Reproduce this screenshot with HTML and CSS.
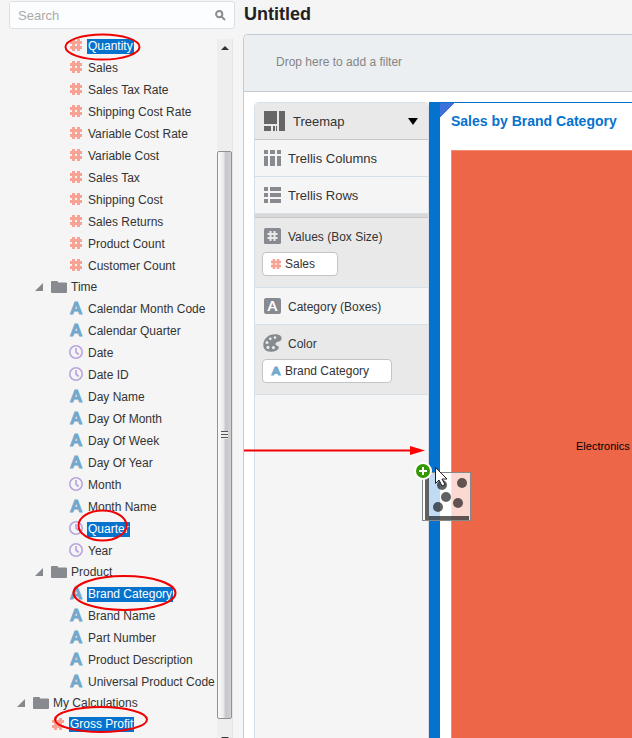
FILE: index.html
```html
<!DOCTYPE html>
<html lang="en">
<head>
<meta charset="utf-8">
<meta name="viewport" content="width=device-width, initial-scale=1">
<title>Untitled</title>
<link rel="stylesheet" href="styles.css">
</head>
<body>
<svg class="defs" aria-hidden="true">
  <symbol id="hash" viewBox="0 0 12 12"><path d="M2 0h3v2h2V0h3v2h2v3h-2v2h2v3h-2v2H7v-2H5v2H2v-2H0V7h2V5H0V2h2zM5 5v2h2V5z" fill-rule="evenodd"/></symbol>
  <symbol id="clock" viewBox="0 0 14 14"><circle cx="7" cy="7" r="6.2" fill="none" stroke="currentColor" stroke-width="1.6"/><path d="M7 3v4.2l2.6 2.3" fill="none" stroke="currentColor" stroke-width="1.7"/></symbol>
  <symbol id="folder" viewBox="0 0 16 12"><path d="M0 1q0-1 1-1h5q1 0 1 1v.5h8q1 0 1 1V11q0 1-1 1H1q-1 0-1-1z"/></symbol>
  <symbol id="twist" viewBox="0 0 8 8"><path d="M8 0v8H0z"/></symbol>
</svg>
<div class="app">
  <aside class="sidebar">
    <label class="search">
      <input type="search" placeholder="Search" aria-label="Search">
      <svg class="lens" viewBox="0 0 11 11" aria-hidden="true"><circle cx="4.2" cy="4.2" r="3.1"/><path d="M6.6 6.6l3.4 3.4"/></svg>
    </label>
    <div class="browser">
      <ul class="tree">
        <li class="item"><svg class="ico hash"><use href="#hash"/></svg><span class="name picked">Quantity</span></li>
        <li class="item"><svg class="ico hash"><use href="#hash"/></svg><span class="name">Sales</span></li>
        <li class="item"><svg class="ico hash"><use href="#hash"/></svg><span class="name">Sales Tax Rate</span></li>
        <li class="item"><svg class="ico hash"><use href="#hash"/></svg><span class="name">Shipping Cost Rate</span></li>
        <li class="item"><svg class="ico hash"><use href="#hash"/></svg><span class="name">Variable Cost Rate</span></li>
        <li class="item"><svg class="ico hash"><use href="#hash"/></svg><span class="name">Variable Cost</span></li>
        <li class="item"><svg class="ico hash"><use href="#hash"/></svg><span class="name">Sales Tax</span></li>
        <li class="item"><svg class="ico hash"><use href="#hash"/></svg><span class="name">Shipping Cost</span></li>
        <li class="item"><svg class="ico hash"><use href="#hash"/></svg><span class="name">Sales Returns</span></li>
        <li class="item"><svg class="ico hash"><use href="#hash"/></svg><span class="name">Product Count</span></li>
        <li class="item"><svg class="ico hash"><use href="#hash"/></svg><span class="name">Customer Count</span></li>
        <li class="item group"><svg class="twist"><use href="#twist"/></svg><svg class="folder"><use href="#folder"/></svg><span class="name">Time</span></li>
        <li class="item"><span class="ico attr" aria-hidden="true">A</span><span class="name">Calendar Month Code</span></li>
        <li class="item"><span class="ico attr" aria-hidden="true">A</span><span class="name">Calendar Quarter</span></li>
        <li class="item"><svg class="ico clock"><use href="#clock"/></svg><span class="name">Date</span></li>
        <li class="item"><svg class="ico clock"><use href="#clock"/></svg><span class="name">Date ID</span></li>
        <li class="item"><span class="ico attr" aria-hidden="true">A</span><span class="name">Day Name</span></li>
        <li class="item"><span class="ico attr" aria-hidden="true">A</span><span class="name">Day Of Month</span></li>
        <li class="item"><span class="ico attr" aria-hidden="true">A</span><span class="name">Day Of Week</span></li>
        <li class="item"><span class="ico attr" aria-hidden="true">A</span><span class="name">Day Of Year</span></li>
        <li class="item"><svg class="ico clock"><use href="#clock"/></svg><span class="name">Month</span></li>
        <li class="item"><span class="ico attr" aria-hidden="true">A</span><span class="name">Month Name</span></li>
        <li class="item"><svg class="ico clock"><use href="#clock"/></svg><span class="name picked">Quarter</span></li>
        <li class="item"><svg class="ico clock"><use href="#clock"/></svg><span class="name">Year</span></li>
        <li class="item group"><svg class="twist"><use href="#twist"/></svg><svg class="folder"><use href="#folder"/></svg><span class="name">Product</span></li>
        <li class="item"><span class="ico attr" aria-hidden="true">A</span><span class="name picked">Brand Category</span></li>
        <li class="item"><span class="ico attr" aria-hidden="true">A</span><span class="name">Brand Name</span></li>
        <li class="item"><span class="ico attr" aria-hidden="true">A</span><span class="name">Part Number</span></li>
        <li class="item"><span class="ico attr" aria-hidden="true">A</span><span class="name">Product Description</span></li>
        <li class="item"><span class="ico attr" aria-hidden="true">A</span><span class="name">Universal Product Code</span></li>
        <li class="item group top"><svg class="twist"><use href="#twist"/></svg><svg class="folder"><use href="#folder"/></svg><span class="name">My Calculations</span></li>
        <li class="item shallow"><svg class="ico hash"><use href="#hash"/></svg><span class="name picked">Gross Profit</span></li>
      </ul>
      <div class="scrollbar" aria-hidden="true">
        <svg class="arrow" viewBox="0 0 8 4"><path d="M4 0l4 4H0z"/></svg>
        <div class="thumb"><span class="grip"></span></div>
        <svg class="arrow down" viewBox="0 0 8 4"><path d="M0 0h8L4 4z"/></svg>
      </div>
    </div>
  </aside>
  <main class="main">
    <h1 class="title">Untitled</h1>
    <section class="project">
      <div class="filters">Drop here to add a filter</div>
      <div class="workspace">
        <div class="grammar">
          <div class="row chooser">
            <svg class="treemap" viewBox="0 0 21 20" aria-hidden="true"><path d="M0 0h13v13H0zM15 0h6v20h-6zM0 15h7v5H0zM9 15h2v5H9zM12 15h1v5h-1z"/></svg>
            <select class="type" aria-label="Visualization type"><option>Treemap</option></select>
            <svg class="caret" viewBox="0 0 10 7" aria-hidden="true"><path d="M0 0h10L5 7z"/></svg>
          </div>
          <div class="row"><svg class="mark" viewBox="0 0 17 16" aria-hidden="true"><path d="M0 0h4v4H0zM6 0h5v4H6zM13 0h4v4h-4zM0 6h4v10H0zM6 6h5v10H6zM13 6h4v10h-4z"/></svg><span class="label">Trellis Columns</span></div>
          <div class="row"><svg class="mark" viewBox="0 0 17 16" aria-hidden="true"><path d="M0 0h4v4H0zM6 0h11v4H6zM0 6h4v4H0zM6 6h11v4H6zM0 12h4v4H0zM6 12h11v4H6z"/></svg><span class="label">Trellis Rows</span></div>
          <div class="divider"></div>
          <div class="slot">
            <div class="head"><svg class="mark" viewBox="0 0 17 16" aria-hidden="true"><rect width="17" height="16" rx="1.5"/><path class="cut" d="M6.5 3v10M10.5 3v10M3.5 6h10M3.5 10h10"/></svg><span class="label drop">Values (Box Size)</span></div>
            <button class="chip" type="button"><svg class="small hash"><use href="#hash"/></svg>Sales</button>
          </div>
          <div class="row"><span class="mark tile" aria-hidden="true">A</span><span class="label drop">Category (Boxes)</span></div>
          <div class="slot">
            <div class="head"><svg class="palette" viewBox="0 0 19 18" aria-hidden="true"><path d="M12 .3C5 .3.3 5.2.3 11 .3 15 3 17.7 7.5 17.7c4.8 0 8.500-2 8.300-4.500-.1-1.300-1.600-1.400-2.600-2-1.200-.8-.8-2.200.4-3 1.500-1 5-.4 5-4C18.600 1.500 15.500.3 12 .3z"/><g class="holes"><circle cx="12" cy="3.6" r="1.3"/><circle cx="7.3" cy="4.8" r="1.4"/><circle cx="4" cy="8.6" r="1.5"/><circle cx="5" cy="13.4" r="1.6"/><circle cx="10.4" cy="13.6" r="1.6"/></g></svg><span class="label drop">Color</span></div>
            <button class="chip" type="button"><span class="small attr" aria-hidden="true">A</span>Brand Category</button>
          </div>
        </div>
        <section class="viz">
          <h2 class="caption">Sales by Brand Category</h2>
          <div class="box">Electronics</div>
        </section>
      </div>
    </section>
  </main>
</div>
<svg class="notes" aria-hidden="true">
  <g class="rings">
    <ellipse cx="102.5" cy="47" rx="37" ry="12.5"/>
    <ellipse cx="102.5" cy="525.5" rx="24" ry="15"/>
    <ellipse cx="124.5" cy="593" rx="51" ry="17"/>
    <ellipse cx="101" cy="719.5" rx="46" ry="12.5"/>
    <path d="M244 450.5h170"/>
  </g>
  <path class="tip" d="M410 446l15 4.5-15 4.5z"/>
  <g class="ghost">
    <rect class="sheet" x="422.5" y="472.5" width="48" height="48"/>
    <path d="M425 474h4v42h40v4h-44z"/>
    <circle cx="442" cy="485" r="5"/><circle cx="462" cy="483" r="5"/><circle cx="446" cy="497" r="5"/><circle cx="458" cy="503" r="5"/><circle cx="438" cy="507" r="5"/>
  </g>
  <circle class="halo" cx="423" cy="471" r="9"/>
  <circle class="plus" cx="423" cy="471" r="7"/>
  <path class="cross" d="M423 467v8M419 471h8"/>
  <path class="pointer" d="M435.5 467.5v16l3.500-3.500 3 6 3-1.500-3-5.500h5z"/>
</svg>
</body>
</html>
```
FILE: styles.css
```css
* { box-sizing: border-box; }
body { margin: 0; background: #f5f5f5; color: #333; font: 13px/20px "Liberation Sans", Arial, sans-serif; }
svg { display: block; flex: none; fill: currentColor; }
ul, h1, h2 { margin: 0; padding: 0; }
.defs { position: absolute; width: 0; height: 0; }
.app { display: flex; height: 100vh; overflow: hidden; }

.sidebar { flex: none; width: 243px; padding: 1px 8px 0 9px; display: flex; flex-direction: column; gap: 5px; }
.search { display: flex; align-items: center; height: 28px; flex: none; padding: 0 8px; border: 1px solid #dbe1e6; border-radius: 3px; background: #fcfdfe; }
.search input { flex: 1; min-width: 0; border: 0; padding: 2px 0 0; outline: 0; background: none; font: inherit; color: #333; }
.search input::placeholder { color: #aaa; opacity: 1; }
.lens { width: 11px; height: 11px; color: #8a8d91; }
.lens * { fill: none; stroke: currentColor; stroke-width: 2; }

.browser { flex: 1; min-height: 0; display: flex; overflow: hidden; }
.tree { flex: 1; min-width: 0; overflow: hidden; list-style: none; font-size: 12px; }
.item { display: flex; align-items: center; height: 22px; padding-left: 60px; white-space: nowrap; }
.item.group { height: 21px; padding-left: 26px; }
.item.top { padding-left: 8px; }
.item.shallow { height: 21px; padding-left: 42px; }
.ico { width: 14px; height: 14px; margin-right: 4px; }
.ico.hash { padding: 1px; }
.hash { color: #f6a295; }
.clock { color: #b9a5de; }
.attr { flex: none; color: #72a8cd; font: 900 16px/14px Lato, sans-serif; text-align: center; -webkit-text-stroke: 1px #72a8cd; }
.name { margin-top: 2px; padding: 0 1px; line-height: 15px; }
.picked { background: #0572ce; color: #fff; }
.twist { width: 8px; height: 8px; margin-right: 8px; color: #85898e; }
.folder { width: 16px; height: 12px; margin-right: 3px; color: #878b8f; }

.scrollbar { flex: none; width: 16px; margin: 5px 2px 0 0; padding-top: 7px; display: flex; flex-direction: column; align-items: center; background: #eee; border-right: 1px solid #e4e4e4; }
.arrow { width: 8px; height: 4px; color: #333; }
.thumb { width: 15px; height: 568px; margin-top: 101px; display: flex; align-items: center; justify-content: center; border: 1px solid #919191; border-radius: 2px; background: linear-gradient(90deg, #fafafa, #ececee 40%, #c6c6ca 60%, #d2d2d6); flex: none; }
.grip { width: 7px; height: 8px; background: repeating-linear-gradient(#555 0 1px, #eee 1px 3px); }
.arrow.down { margin-top: 18px; }

.main { flex: 1; min-width: 0; display: flex; flex-direction: column; }
.title { height: 34px; padding: 3px 0 0 1px; color: #222; font-size: 18px; line-height: 22px; }
.project { flex: 1; min-height: 0; display: flex; flex-direction: column; border: 1px solid #c1ccd6; border-width: 1px 0 0 1px; border-radius: 5px 0 0 0; background: #fff; overflow: hidden; }
.filters { flex: none; height: 57px; padding: 17px 32px; background: #ebeff2; border-bottom: 1px solid #c1ccd6; color: #858585; font-size: 12px; }
.workspace { flex: 1; min-height: 0; display: flex; padding: 10px 0 0 10px; }
.grammar { flex: none; width: 175px; border: 1px solid #d6dfe6; border-bottom: 0; border-radius: 5px 5px 0 0; background: #f5f5f5; overflow: hidden; }
.row { display: flex; align-items: center; gap: 7px; height: 37px; padding: 0 9px; border-bottom: 1px solid #d6dfe6; }
.row.chooser { background: #e9e9e9; border-color: #c8c8c8; }
.treemap { width: 21px; height: 20px; color: #666; }
.type { flex: 1; min-width: 0; appearance: none; border: 0; padding: 2px 1px 0; background: none; color: #333; font: inherit; outline: 0; }
.caret { width: 10px; height: 7px; margin-right: 1px; color: #000; }
.mark { width: 17px; height: 16px; color: #878b8f; }
.label { padding-top: 2px; }
.label.drop { font-size: 12px; }
.cut { fill: none; stroke: #e9e9e9; stroke-width: 2; }
.tile { flex: none; border-radius: 2px; background: #878b8f; color: #fff; font: 900 14px/16px Lato, sans-serif; text-align: center; }
.divider { height: 4px; background: #d9d9d9; border-bottom: 1px solid #c8c8c8; }
.slot { height: 70px; padding: 8px 7px; border-bottom: 1px solid #d6dfe6; background: #e9e9e9; }
.head { display: flex; align-items: center; gap: 7px; padding-left: 2px; height: 20px; }
.palette { width: 19px; height: 18px; margin: 0 -1px; color: #878b8f; }
.holes { fill: #e9e9e9; }
.chip { display: flex; align-items: center; gap: 4px; height: 24px; margin-top: 6px; padding: 0 22px 0 8px; border: 1px solid #c4c4c4; border-radius: 4px; background: #fff; color: #333; font: inherit; font-size: 12px; }
.small { width: 10px; height: 10px; }
.small.attr { font-size: 12px; line-height: 10px; }

.viz { flex: 1; min-width: 0; display: flex; flex-direction: column; border-left: 11px solid #0572ce; border-top: 1px solid #0572ce; background: linear-gradient(135deg, #3f6fd8 10px, #fff 10px); }
.caption { flex: none; height: 47px; padding: 9px 0 0 11px; color: #0572ce; font-size: 14px; line-height: 18px; white-space: nowrap; }
.box { flex: 1; display: flex; align-items: center; margin-left: 11px; padding: 2px 0 0 124px; border: 1px solid #f28c73; border-width: 1px 0 0 1px; background: #ed6647; color: #000; font-size: 11px; }

.notes { position: absolute; top: 0; left: 0; width: 100%; height: 100%; pointer-events: none; }
.rings { fill: none; stroke: #f00000; stroke-width: 2; }
.tip { fill: #ff0000; }
.ghost { fill: #000; fill-opacity: .62; }
.ghost .sheet { fill: #fff; fill-opacity: .75; stroke: #888; }
.halo, .cross { fill: #fff; }
.plus { fill: #339900; }
.cross { stroke: #fff; stroke-width: 2; }
.pointer { fill: #fff; stroke: #222; }
```
